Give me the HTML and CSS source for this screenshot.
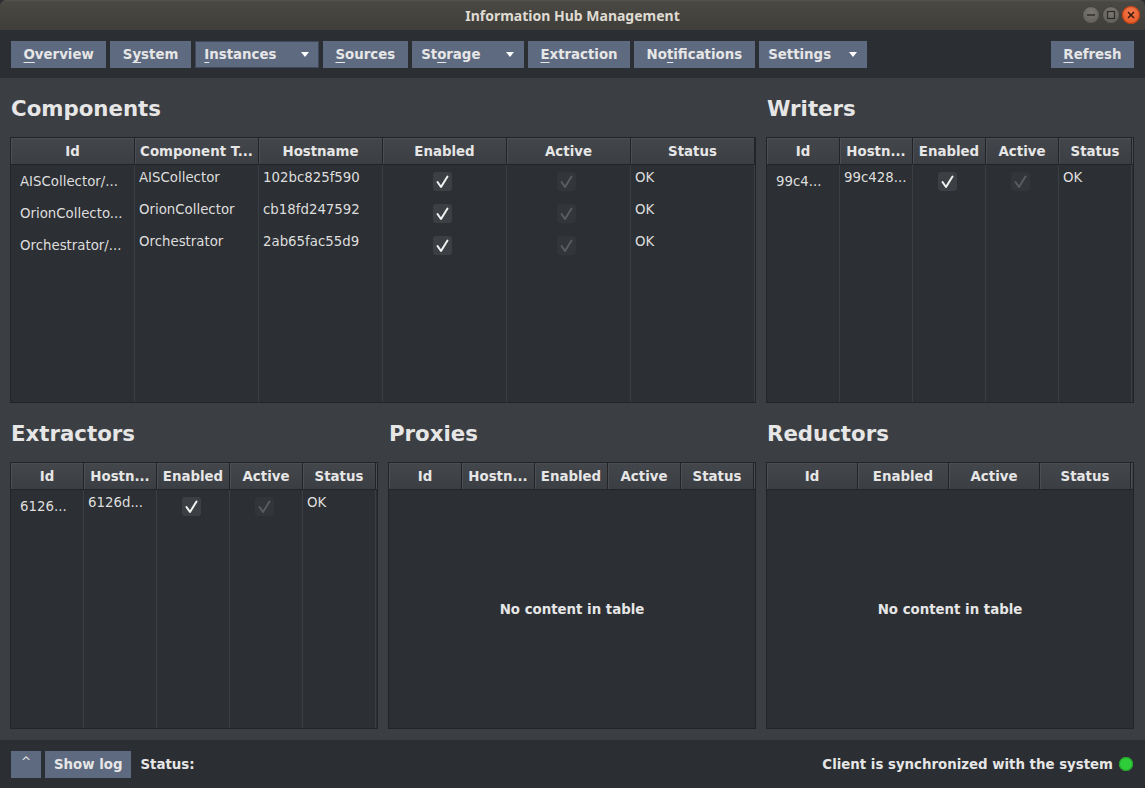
FILE: index.html
```html
<!DOCTYPE html>
<html>
<head>
<meta charset="utf-8">
<title>Information Hub Management</title>
<link rel="stylesheet" href="styles.css">
</head>
<body>
<div class="window">
  <header class="titlebar">
    <div class="title">Information Hub Management</div>
    <div class="wm">
      <span class="wm-btn wm-min"><svg width="18" height="18" viewBox="0 0 18 18"><line x1="5" y1="9" x2="13" y2="9" stroke="#2b2a27" stroke-width="1.4"/></svg></span>
      <span class="wm-btn wm-max"><svg width="18" height="18" viewBox="0 0 18 18"><rect x="5.5" y="5.5" width="7" height="7" fill="none" stroke="#2b2a27" stroke-width="1.2"/></svg></span>
      <span class="wm-btn wm-close"><svg width="18" height="18" viewBox="0 0 18 18"><path d="M6 6 L12 12 M12 6 L6 12" stroke="#3a1a0c" stroke-width="1.5"/></svg></span>
    </div>
  </header>

  <nav class="toolbar">
    <button class="btn"><span class="mn">O</span>verview</button>
    <button class="btn">S<span class="mn">y</span>stem</button>
    <button class="btn menu focused"><span class="lbl"><span class="mn">I</span>nstances</span><span class="arrow"></span></button>
    <button class="btn"><span class="mn">S</span>ources</button>
    <button class="btn menu"><span class="lbl">St<span class="mn">o</span>rage</span><span class="arrow"></span></button>
    <button class="btn"><span class="mn">E</span>xtraction</button>
    <button class="btn">No<span class="mn">t</span>ifications</button>
    <button class="btn menu short"><span class="lbl">Settings</span><span class="arrow"></span></button>
    <button class="btn refresh"><span class="mn">R</span>efresh</button>
  </nav>

  <main class="content">
    <section class="panel wide">
      <h2>Components</h2>
      <div class="table cols-comp">
        <div class="thead">
          <div class="th">Id</div><div class="th">Component T...</div><div class="th">Hostname</div><div class="th">Enabled</div><div class="th">Active</div><div class="th">Status</div>
        </div>
        <div class="tbody">
          <div class="col id"><div class="td">AISCollector/...</div><div class="td">OrionCollecto...</div><div class="td">Orchestrator/...</div></div>
          <div class="col"><div class="td">AISCollector</div><div class="td">OrionCollector</div><div class="td">Orchestrator</div></div>
          <div class="col"><div class="td">102bc825f590</div><div class="td">cb18fd247592</div><div class="td">2ab65fac55d9</div></div>
          <div class="col chk"><div class="td"><span class="cb on"><svg viewBox="0 0 19 19"><polyline points="4.5,10 8,15 14.5,4.5"/></svg></span></div><div class="td"><span class="cb on"><svg viewBox="0 0 19 19"><polyline points="4.5,10 8,15 14.5,4.5"/></svg></span></div><div class="td"><span class="cb on"><svg viewBox="0 0 19 19"><polyline points="4.5,10 8,15 14.5,4.5"/></svg></span></div></div>
          <div class="col chk"><div class="td"><span class="cb dis"><svg viewBox="0 0 19 19"><polyline points="4.5,10 8,15 14.5,4.5"/></svg></span></div><div class="td"><span class="cb dis"><svg viewBox="0 0 19 19"><polyline points="4.5,10 8,15 14.5,4.5"/></svg></span></div><div class="td"><span class="cb dis"><svg viewBox="0 0 19 19"><polyline points="4.5,10 8,15 14.5,4.5"/></svg></span></div></div>
          <div class="col"><div class="td">OK</div><div class="td">OK</div><div class="td">OK</div></div>
        </div>
      </div>
    </section>

    <section class="panel">
      <h2>Writers</h2>
      <div class="table cols-5">
        <div class="thead">
          <div class="th">Id</div><div class="th">Hostn...</div><div class="th">Enabled</div><div class="th">Active</div><div class="th">Status</div><div class="th filler"></div>
        </div>
        <div class="tbody">
          <div class="col id"><div class="td">99c4...</div></div>
          <div class="col"><div class="td">99c428...</div></div>
          <div class="col chk"><div class="td"><span class="cb on"><svg viewBox="0 0 19 19"><polyline points="4.5,10 8,15 14.5,4.5"/></svg></span></div></div>
          <div class="col chk"><div class="td"><span class="cb dis"><svg viewBox="0 0 19 19"><polyline points="4.5,10 8,15 14.5,4.5"/></svg></span></div></div>
          <div class="col"><div class="td">OK</div></div>
          <div class="col filler"></div>
        </div>
      </div>
    </section>

    <section class="panel">
      <h2>Extractors</h2>
      <div class="table cols-5">
        <div class="thead">
          <div class="th">Id</div><div class="th">Hostn...</div><div class="th">Enabled</div><div class="th">Active</div><div class="th">Status</div><div class="th filler"></div>
        </div>
        <div class="tbody">
          <div class="col id"><div class="td">6126...</div></div>
          <div class="col"><div class="td">6126d...</div></div>
          <div class="col chk"><div class="td"><span class="cb on"><svg viewBox="0 0 19 19"><polyline points="4.5,10 8,15 14.5,4.5"/></svg></span></div></div>
          <div class="col chk"><div class="td"><span class="cb dis"><svg viewBox="0 0 19 19"><polyline points="4.5,10 8,15 14.5,4.5"/></svg></span></div></div>
          <div class="col"><div class="td">OK</div></div>
          <div class="col filler"></div>
        </div>
      </div>
    </section>

    <section class="panel">
      <h2>Proxies</h2>
      <div class="table cols-5">
        <div class="thead">
          <div class="th">Id</div><div class="th">Hostn...</div><div class="th">Enabled</div><div class="th">Active</div><div class="th">Status</div><div class="th filler"></div>
        </div>
        <div class="tbody empty">No content in table</div>
      </div>
    </section>

    <section class="panel">
      <h2>Reductors</h2>
      <div class="table cols-4">
        <div class="thead">
          <div class="th">Id</div><div class="th">Enabled</div><div class="th">Active</div><div class="th">Status</div><div class="th filler"></div>
        </div>
        <div class="tbody empty">No content in table</div>
      </div>
    </section>
  </main>

  <footer class="statusbar">
    <button class="btn small caret">^</button>
    <button class="btn small">Show log</button>
    <span class="status-label">Status:</span>
    <span class="sync">Client is synchronized with the system</span>
    <span class="led"></span>
  </footer>
</div>
</body>
</html>
```

FILE: styles.css
```css
* { box-sizing: border-box; }
html, body { margin: 0; padding: 0; }
body {
  width: 1145px;
  height: 788px;
  overflow: hidden;
  background: #2b2e32;
  font-family: "DejaVu Sans", sans-serif;
  font-size: 13.33px;
  color: #e2e2e2;
}
.window {
  display: flex;
  flex-direction: column;
  height: 788px;
}

/* title bar */
.titlebar {
  height: 30px;
  flex: none;
  position: relative;
  display: flex;
  align-items: center;
  justify-content: center;
  background: linear-gradient(#57544e 0, #4a4843 2px, #403e3a 100%);
  border-radius: 6px 6px 0 0;
}
.title {
  font-family: "Noto Sans", "DejaVu Sans", sans-serif;
  font-weight: 700;
  font-size: 14px;
  color: #dfdbd2;
}
.wm {
  position: absolute;
  right: 5px;
  top: 6px;
  display: flex;
  gap: 2px;
}
.wm-btn {
  width: 18px;
  height: 18px;
  border-radius: 50%;
  display: block;
  background: radial-gradient(circle at 50% 35%, #7a7771, #5a5853);
  box-shadow: inset 0 0 0 1px #3a3935;
}
.wm-btn svg { display: block; }
.wm-close {
  background: radial-gradient(circle at 50% 35%, #f47a4e, #e2501c);
  box-shadow: inset 0 0 0 1px #b53d12;
}

/* toolbar */
.toolbar {
  flex: none;
  height: 48px;
  display: flex;
  align-items: flex-start;
  padding: 11px 11px 0 11px;
  gap: 4px;
  background: #2b2e32;
}
.btn {
  height: 27px;
  border: 0;
  margin: 0;
  background: #5e6a80;
  color: #e6e6e6;
  font-family: "DejaVu Sans", sans-serif;
  font-weight: 700;
  font-size: 13.33px;
  padding: 0 12.5px;
  display: flex;
  align-items: center;
  white-space: nowrap;
}
.mn {
  text-decoration: underline;
  text-decoration-thickness: 1px;
  text-underline-offset: 3px;
}
.btn.menu { padding: 0 9.5px; }
.btn.menu .arrow {
  width: 0; height: 0;
  margin-left: 26px;
  border-left: 4.5px solid transparent;
  border-right: 4.5px solid transparent;
  border-top: 5px solid #ffffff;
}
.btn.menu.focused .arrow { margin-left: 25px; }
.btn.menu.short .arrow { margin-left: 18px; }
.btn.focused { box-shadow: inset 0 0 0 1px #414a5b; }
.btn.refresh { margin-left: auto; padding: 0 12.5px 0 12px; }

/* main content */
.content {
  flex: 1;
  background: #3b3e42;
  display: grid;
  grid-template-columns: 368px 368px 368px;
  grid-template-rows: 310px 311px;
  column-gap: 10px;
  row-gap: 15px;
  padding: 15px 11px 11px 10px;
}
.panel {
  display: flex;
  flex-direction: column;
  min-height: 0;
}
.panel.wide { grid-column: span 2; }
.panel h2 {
  margin: 1px 0 13px 1px;
  height: 30px;
  line-height: 30px;
  font-size: 21.3px;
  font-weight: 700;
  color: #e6e6e6;
}

/* tables */
.table {
  flex: 1;
  display: flex;
  flex-direction: column;
  border: 1px solid #222427;
  background: #2c2f33;
  min-height: 0;
}
.cols-comp { --cols: repeat(6, 1fr); }
.cols-5 { --cols: repeat(5, 73px) 1fr; }
.cols-4 { --cols: repeat(4, 91px) 1fr; }
.thead {
  flex: none;
  height: 27px;
  display: grid;
  grid-template-columns: var(--cols);
  border-bottom: 1px solid #222427;
  background: #3d4044;
}
.th {
  display: flex;
  align-items: center;
  justify-content: center;
  padding-top: 1px;
  font-weight: 700;
  font-size: 13.33px;
  color: #e6e6e6;
  border-right: 1px solid #222427;
  background: linear-gradient(#43464a, #3b3e42);
  box-shadow: inset 1px 1px 0 #4b4e52;
  white-space: nowrap;
  overflow: hidden;
}
.th.filler { border-right: 0; }
.tbody {
  flex: 1;
  display: grid;
  grid-template-columns: var(--cols);
  min-height: 0;
}
.col {
  border-right: 1px solid #3b3e42;
  display: flex;
  flex-direction: column;
}
.col.filler { border-right: 0; }
.td {
  height: 32px;
  padding: 5px 4px 0 4px;
  line-height: 15px;
  white-space: nowrap;
  overflow: hidden;
  color: #dedede;
}
.col.id .td {
  padding: 0 0 0 9px;
  display: flex;
  align-items: center;
}
.col.chk .td {
  padding: 0;
  display: flex;
  align-items: center;
  justify-content: center;
}
.cb {
  width: 19px;
  height: 19px;
  border-radius: 3px;
  display: block;
  margin-right: 4px;
}
.cb svg { display: block; width: 19px; height: 19px; }
.cb polyline { fill: none; stroke-width: 2; stroke-linecap: round; stroke-linejoin: round; }
.cb.on { background: #3c3f43; }
.cb.on polyline { stroke: #f2f2f2; }
.cb.dis { background: #323539; }
.cb.dis polyline { stroke: #595c60; }
.tbody.empty {
  display: flex;
  align-items: center;
  justify-content: center;
  font-weight: 700;
  color: #e6e6e6;
}

/* status bar */
.statusbar {
  flex: none;
  height: 48px;
  display: flex;
  align-items: center;
  gap: 4px;
  padding: 0 12px 0 11px;
  background: #2b2e32;
}
.btn.small { padding: 0 9px; }
.btn.caret {
  width: 30px;
  justify-content: center;
  padding: 0;
  font-weight: 400;
  font-size: 12px;
  padding-bottom: 5px;
}
.status-label {
  margin-left: 5px;
  font-weight: 700;
  color: #e6e6e6;
}
.sync {
  margin-left: auto;
  font-weight: 700;
  color: #e6e6e6;
}
.led {
  width: 14px;
  height: 14px;
  border-radius: 50%;
  background: #2fcd3a;
  box-shadow: inset 0 0 0 1px #23a22c;
  margin-left: 2px;
}
```
